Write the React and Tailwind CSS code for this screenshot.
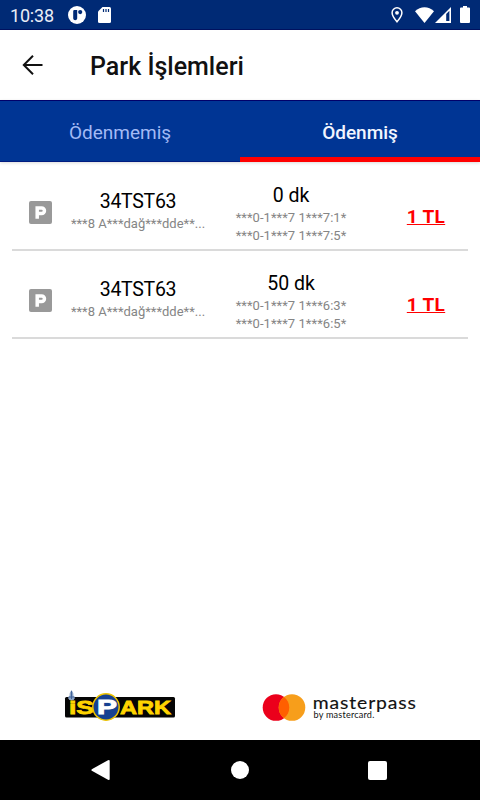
import { clsx } from "clsx";

const islemler = [
  {
    id: 1,
    plaka: "34TST63",
    adres: "***8 A***dağ***dde**...",
    sure: "0 dk",
    giris: "***0-1***7 1***7:1*",
    cikis: "***0-1***7 1***7:5*",
    ucret: "1 TL",
  },
  {
    id: 2,
    plaka: "34TST63",
    adres: "***8 A***dağ***dde**...",
    sure: "50 dk",
    giris: "***0-1***7 1***6:3*",
    cikis: "***0-1***7 1***6:5*",
    ucret: "1 TL",
  },
];

function StatusBar() {
  return (
    <div className="flex h-[30px] items-center border-b border-[#00115f] bg-[#002a75] pl-[10px] pr-[9px] text-white">
      <span className="w-[58px] pt-[2px] text-[18px] leading-[28px] tracking-[-0.2px] text-[#e9edf6]">10:38</span>
      <svg className="h-[18px] w-[18px]" viewBox="0 0 18 18">
        <circle cx="9" cy="9" r="9" fill="#fff" />
        <path d="M5.2 5.2A1.2 1.2 0 0 1 6.4 4H9.2V12.4A2 2 0 0 1 7.2 14.2A2 2 0 0 1 5.2 12.4Z" fill="#002a75" />
        <circle cx="12.2" cy="6.1" r="2.1" fill="#002a75" />
      </svg>
      <svg className="ml-[12px] h-4 w-[13px]" viewBox="0 0 13 16">
        <path d="M4.5 0H11.5A1.5 1.5 0 0 1 13 1.5V14.5A1.5 1.5 0 0 1 11.5 16H1.5A1.5 1.5 0 0 1 0 14.5V4.5Z" fill="#fff" />
        <path d="M5.5 2V5M8 2V5M10.5 2V5" stroke="#002a75" strokeWidth="1.2" />
      </svg>
      <svg className="ml-auto h-4 w-3" viewBox="0 0 12 16">
        <path d="M6 .8A4.9 4.9 0 0 0 1.1 5.7C1.1 9 6 14.8 6 14.8S10.9 9 10.9 5.7A4.9 4.9 0 0 0 6 .8Z" fill="none" stroke="#fff" strokeWidth="1.5" />
        <circle cx="6" cy="5.8" r="1.9" fill="#fff" />
      </svg>
      <svg className="ml-[12px] h-4 w-[19px]" viewBox="0 0 19 16">
        <path d="M9.5 16L0 4.2C5.5-1.1 13.5-1.1 19 4.2Z" fill="#fff" />
      </svg>
      <svg className="ml-px h-4 w-4" viewBox="0 0 16 16">
        <path d="M0 16L16 0V16Z" fill="#fff" />
        <path d="M11.2 7L14.4 3.8V14H11.2Z" fill="#002a75" />
      </svg>
      <svg className="ml-[9px] mr-[1px] h-[17px] w-[10px]" viewBox="0 0 10 17">
        <path d="M3 0H7V1.5H9A1 1 0 0 1 10 2.5V16A1 1 0 0 1 9 17H1A1 1 0 0 1 0 16V2.5A1 1 0 0 1 1 1.5H3Z" fill="#fff" />
      </svg>
    </div>
  );
}

function Header() {
  return (
    <header className="flex h-[70px] items-center bg-white pl-[22px]">
      <svg className="mb-[1px] h-5 w-[21px]" viewBox="0 0 21 20" fill="none" stroke="#111" strokeWidth="2">
        <path d="M20.5 10H2M11 .7L1.8 10L11 19.3" />
      </svg>
      <h1 className="ml-[47px] mt-[3px] whitespace-nowrap text-[25px] font-medium leading-[30px] text-[#111]">Park İşlemleri</h1>
    </header>
  );
}

function Tab({ baslik, aktif }) {
  return (
    <div
      className={clsx(
        "flex-1 pt-px text-center text-[19px] leading-[62px]",
        aktif ? "border-b-[5px] border-[#ff0000] font-medium text-[#f2f5ff]" : "border-b border-[#001b80] text-[#a3baf5]"
      )}
    >
      {baslik}
    </div>
  );
}

function ParkIcon() {
  return (
    <svg className="h-[23px] w-[23px]" viewBox="0 0 23 23">
      <rect width="23" height="23" rx="2" fill="#999" />
      <path d="M8.2 17.8V6.9H12.6A2.8 2.8 0 0 1 12.6 12.6H8.2" fill="none" stroke="#fff" strokeWidth="3.5" />
    </svg>
  );
}

function IslemSatiri({ islem }) {
  return (
    <li className="mx-[12px] grid h-[88px] grid-cols-[57px_138px_168px_93px] border-b-2 border-[#dadada]">
      <div className="pl-[17px] pt-[38px]">
        <ParkIcon />
      </div>
      <div className="whitespace-nowrap pt-[27px] text-center">
        <p className="text-[19.5px] leading-6 tracking-[-0.3px] text-black">{islem.plaka}</p>
        <p className="text-[13px] leading-5 text-[#858585]">{islem.adres}</p>
      </div>
      <div className="whitespace-nowrap pt-5 text-center">
        <p className="text-[19.5px] leading-[26px] text-black">{islem.sure}</p>
        <p className="text-[13px] leading-[18px] tracking-[0.05px] text-[#858585]">{islem.giris}</p>
        <p className="text-[13px] leading-[18px] tracking-[0.05px] text-[#858585]">{islem.cikis}</p>
      </div>
      <p className="pl-[9px] pt-[41px] text-center text-[19px] font-bold leading-[25px] tracking-[0.3px] text-[#ff0000] underline">{islem.ucret}</p>
    </li>
  );
}

function IsparkLogo() {
  return (
    <svg className="h-[34px] w-[112px]" viewBox="0 0 112 34" fontFamily="Liberation Sans, Arial, sans-serif" fontWeight="bold">
      <rect x="1" y="9" width="110" height="20.5" rx="1.5" fill="#050505" />
      <path d="M7.5 2Q10 5 9.5 8L11 10Q10 12.5 7.5 12.5T4 10L5.5 8Q5 5 7.5 2Z" fill="#8ba3c4" />
      <path d="M7.5 3V11M4.6 9H10.5" stroke="#41639a" strokeWidth="1" />
      <g fill="#ffd400" stroke="#ffd400" strokeWidth=".8" fontSize="18.5">
        <text x="5" y="26.3" textLength="25" lengthAdjust="spacingAndGlyphs">iS</text>
        <text x="56" y="26.3" textLength="51" lengthAdjust="spacingAndGlyphs">ARK</text>
      </g>
      <circle cx="42" cy="19" r="13.2" fill="#164191" stroke="#efc400" strokeWidth="1.5" />
      <text x="33" y="26.2" fontSize="19.5" fill="#fff" stroke="#fff" strokeWidth=".8" textLength="20" lengthAdjust="spacingAndGlyphs">P</text>
    </svg>
  );
}

function MasterpassLogo() {
  return (
    <svg className="h-[34px] w-[156px]" viewBox="0 0 156 34">
      <circle cx="14" cy="19.5" r="13.3" fill="#eb001b" />
      <circle cx="30" cy="19.5" r="13.3" fill="#f79e1b" />
      <path d="M22 8.9A13.3 13.3 0 0 1 22 30.1A13.3 13.3 0 0 1 22 8.9Z" fill="#ff5f00" />
      <g fill="#111" fontFamily="Lato, sans-serif">
        <text x="50.8" y="20.8" fontSize="17.5" letterSpacing=".8" stroke="#111" strokeWidth=".15" textLength="104" lengthAdjust="spacingAndGlyphs">masterpass</text>
        <text x="51.5" y="29.6" fontSize="8.5" letterSpacing=".2" textLength="61" lengthAdjust="spacingAndGlyphs">by mastercard.</text>
      </g>
    </svg>
  );
}

function NavBar() {
  return (
    <nav className="flex h-[60px] items-center justify-between bg-black pl-[91px] pr-[93px]">
      <svg className="h-5 w-[19px]" viewBox="0 0 19 20">
        <path d="M.8 9.2L17 .2Q18.7-.4 18.7 1V19Q18.7 20.4 17 19.8L.8 10.8Q0 10 .8 9.2Z" fill="#fff" />
      </svg>
      <div className="ml-[2px] h-[18px] w-[18px] rounded-full bg-white" />
      <div className="h-[19px] w-[19px] rounded-[2px] bg-white" />
    </nav>
  );
}

export default function App() {
  return (
    <div className="flex h-[800px] w-[480px] flex-col overflow-hidden bg-white font-['Roboto',sans-serif]">
      <StatusBar />
      <Header />
      <div className="flex h-[62px] border-t border-[#00006a] bg-[#003594] shadow-[0_1px_3px_rgba(0,0,0,0.15)]">
        <Tab baslik="Ödenmemiş" />
        <Tab baslik="Ödenmiş" aktif />
      </div>
      <ul className="flex-1 pt-px">
        {islemler.map((islem) => (
          <IslemSatiri key={islem.id} islem={islem} />
        ))}
      </ul>
      <footer className="flex h-[52px] gap-[86px] pl-[64px]">
        <IsparkLogo />
        <MasterpassLogo />
      </footer>
      <NavBar />
    </div>
  );
}
